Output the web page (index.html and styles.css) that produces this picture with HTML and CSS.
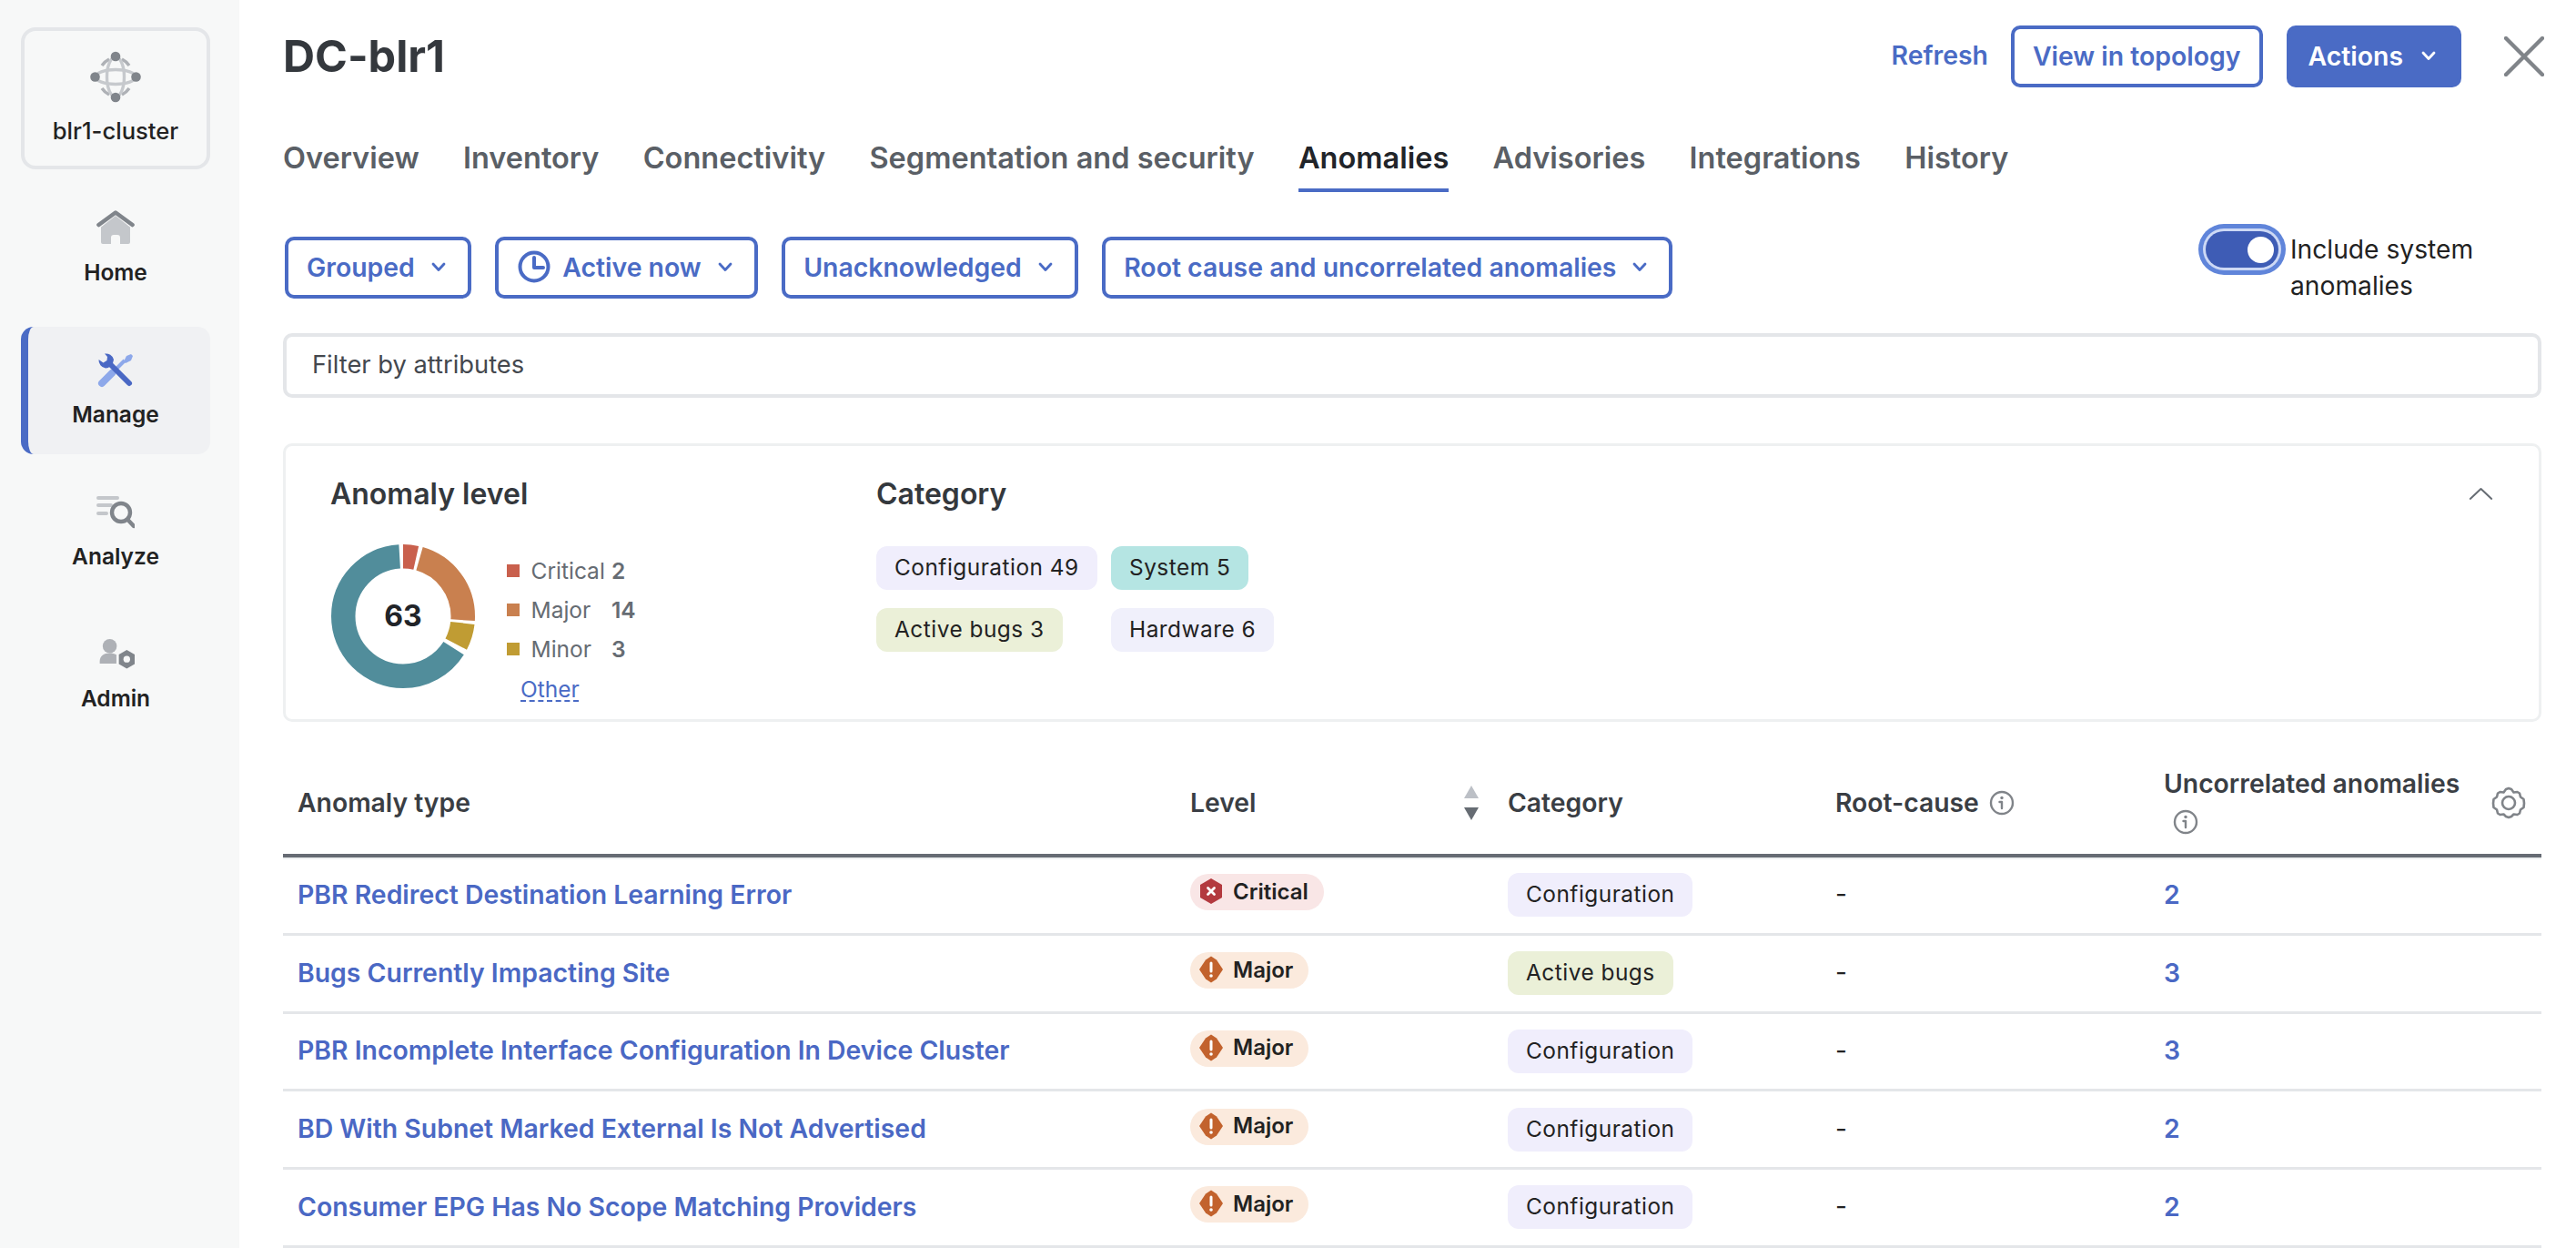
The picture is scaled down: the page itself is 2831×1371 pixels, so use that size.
FILE: index.html
```html
<!DOCTYPE html>
<html lang="en">
<head>
<meta charset="utf-8">
<title>DC-blr1</title>
<link rel="stylesheet" href="styles.css">
</head>
<body>
<aside class="sidebar">
  <div class="cluster">
    <svg class="cluster-icon" viewBox="0 0 56 57">
      <g fill="none" stroke="#aeb1b6" stroke-width="3.4">
        <path d="M13 16A21 21 0 0 1 21 9M35 9A21 21 0 0 1 43 16M43 41A21 21 0 0 1 35 48M21 48A21 21 0 0 1 13 41"/>
      </g>
      <g fill="none" stroke="#c6c9cd" stroke-width="3.4">
        <ellipse cx="28" cy="28.5" rx="9.5" ry="22"/>
        <ellipse cx="28" cy="28.5" rx="22" ry="8"/>
      </g>
      <g fill="#80858b">
        <circle cx="28" cy="6" r="5.3"/>
        <circle cx="28" cy="51" r="5.3"/>
        <circle cx="5.5" cy="28.5" r="5.3"/>
        <circle cx="50.5" cy="28.5" r="5.3"/>
      </g>
    </svg>
    <span class="cluster-name">blr1-cluster</span>
  </div>
  <nav class="nav">
    <a class="nav-item">
      <svg class="nav-icon" viewBox="0 0 42 40">
        <path d="M5 19.5 21 7l16 12.500V36a2 2 0 0 1-2 2H26v-7a3 3 0 0 0-3-3h-4a3 3 0 0 0-3 3v7H7a2 2 0 0 1-2-2z" fill="#c4c7cb"/>
        <path d="M2.5 17 21 3.5 39.5 17" fill="none" stroke="#80858b" stroke-width="4.6" stroke-linecap="round" stroke-linejoin="round"/>
      </svg>
      <span class="nav-label">Home</span>
    </a>
    <a class="nav-item active">
      <svg class="nav-icon" viewBox="0 0 42 40">
        <path d="M6 35 17 24" stroke="#8da8ea" stroke-width="8" stroke-linecap="round" fill="none"/>
        <path d="M17 24 31 10" stroke="#8da8ea" stroke-width="4" fill="none"/>
        <path d="M30 11l3-6 5-2 2 2-2 5-6 3z" fill="#8da8ea"/>
        <path d="M15 14 36 35" stroke="#4a68c4" stroke-width="6" stroke-linecap="round" fill="none"/>
        <path d="M9 2.5a9 9 0 0 1 10 6.5l-1 4-5 5-3 .5A9 9 0 0 1 2.5 9l5 3.5 4-2.500.5-4z" fill="#4a68c4"/>
      </svg>
      <span class="nav-label">Manage</span>
    </a>
    <a class="nav-item">
      <svg class="nav-icon" viewBox="0 0 42 40">
        <path d="M2 5h21M2 13h14M2 22h9" stroke="#c4c7cb" stroke-width="4" stroke-linecap="round" fill="none"/>
        <circle cx="27" cy="21" r="10" fill="none" stroke="#80858b" stroke-width="4.4"/>
        <path d="M34 28.5 41 36" stroke="#80858b" stroke-width="4.4" stroke-linecap="round" fill="none"/>
      </svg>
      <span class="nav-label">Analyze</span>
    </a>
    <a class="nav-item">
      <svg class="nav-icon" viewBox="0 0 46 40">
        <circle cx="16" cy="11" r="8.5" fill="#aeb1b6"/>
        <path d="M4 32v-3c0-6 5-9.500 12-9.500 3 0 5.500.5 8 1.800V32z" fill="#aeb1b6"/>
        <path d="M36.500 15.500 46 21v11.500L36.500 38 27 32.500V21z" fill="#80858b"/>
        <circle cx="36.5" cy="26.8" r="4" fill="#f7f8f8"/>
      </svg>
      <span class="nav-label">Admin</span>
    </a>
  </nav>
</aside>

<main class="main">
  <header class="header">
    <h1 class="title">DC-blr1</h1>
    <div class="header-actions">
      <a class="link-btn">Refresh</a>
      <button class="btn btn-outline">View in topology</button>
      <button class="btn btn-solid btn-menu">Actions
        <svg class="chev" viewBox="0 0 16 11"><path d="M2 2l6 6.5L14 2"/></svg>
      </button>
      <svg class="close" viewBox="0 0 44 44"><path d="M2 2l40 40M42 2 2 42"/></svg>
    </div>
  </header>

  <nav class="tabs">
    <a class="tab">Overview</a>
    <a class="tab">Inventory</a>
    <a class="tab">Connectivity</a>
    <a class="tab">Segmentation and security</a>
    <a class="tab current">Anomalies</a>
    <a class="tab">Advisories</a>
    <a class="tab">Integrations</a>
    <a class="tab">History</a>
  </nav>

  <section class="filters">
    <div class="filter-buttons">
      <button class="btn btn-outline btn-menu">Grouped
        <svg class="chev" viewBox="0 0 16 11"><path d="M2 2l6 6.5L14 2"/></svg>
      </button>
      <button class="btn btn-outline btn-menu btn-clock">
        <svg class="clock" viewBox="0 0 36 36"><circle cx="18" cy="18" r="15.5"/><path d="M18 8v11h10"/></svg>
        Active now
        <svg class="chev" viewBox="0 0 16 11"><path d="M2 2l6 6.5L14 2"/></svg>
      </button>
      <button class="btn btn-outline btn-menu">Unacknowledged
        <svg class="chev" viewBox="0 0 16 11"><path d="M2 2l6 6.5L14 2"/></svg>
      </button>
      <button class="btn btn-outline btn-menu">Root cause and uncorrelated anomalies
        <svg class="chev" viewBox="0 0 16 11"><path d="M2 2l6 6.5L14 2"/></svg>
      </button>
    </div>
    <div class="toggle-wrap">
      <span class="toggle"><span class="knob"></span></span>
      <span class="toggle-label">Include system anomalies</span>
    </div>
  </section>

  <div class="search">Filter by attributes</div>

  <section class="card">
    <div class="level">
      <h2 class="card-title">Anomaly level</h2>
      <div class="level-body">
        <div class="donut">
          <svg viewBox="0 0 158 158">
            <g fill="none" stroke-width="26.5" transform="rotate(-90 79 79)">
              <circle cx="79" cy="79" r="65.75" pathLength="630" stroke="#c9604d" stroke-dasharray="22 608"/>
              <circle cx="79" cy="79" r="65.75" pathLength="630" stroke="#c9804f" stroke-dasharray="136 494" stroke-dashoffset="-28"/>
              <circle cx="79" cy="79" r="65.75" pathLength="630" stroke="#c09c33" stroke-dasharray="37 593" stroke-dashoffset="-169"/>
              <circle cx="79" cy="79" r="65.75" pathLength="630" stroke="#518d9b" stroke-dasharray="410 220" stroke-dashoffset="-214"/>
            </g>
          </svg>
          <span class="donut-value">63</span>
        </div>
        <div class="legend">
          <i class="swatch sw-critical"></i><span class="legend-label">Critical</span><b class="legend-num">2</b>
          <i class="swatch sw-major"></i><span class="legend-label">Major</span><b class="legend-num">14</b>
          <i class="swatch sw-minor"></i><span class="legend-label">Minor</span><b class="legend-num">3</b>
          <a class="legend-other">Other</a>
        </div>
      </div>
    </div>
    <div class="category">
      <h2 class="card-title">Category</h2>
      <div class="chips">
        <span class="chip chip-config">Configuration 49</span>
        <span class="chip chip-system">System 5</span>
        <span class="chip chip-bugs">Active bugs 3</span>
        <span class="chip chip-hardware">Hardware 6</span>
      </div>
    </div>
    <svg class="collapse" viewBox="0 0 30 16"><path d="M2 14 15 2l13 12"/></svg>
  </section>

  <section class="table">
    <div class="row head">
      <div class="cell">Anomaly type</div>
      <div class="cell cell-level">Level
        <span class="sort"><i class="sort-up"></i><i class="sort-down"></i></span>
      </div>
      <div class="cell">Category</div>
      <div class="cell cell-info">Root-cause
        <svg class="info" viewBox="0 0 28 28"><circle cx="14" cy="14" r="12"/><path d="M14 13v7M11.5 13H14"/><circle class="dot" cx="14" cy="8.5" r="1.7"/></svg>
      </div>
      <div class="cell cell-last">
        <div class="uncorrelated">Uncorrelated anomalies
          <svg class="info info-under" viewBox="0 0 28 28"><circle cx="14" cy="14" r="12"/><path d="M14 13v7M11.5 13H14"/><circle class="dot" cx="14" cy="8.5" r="1.7"/></svg>
        </div>
        <svg class="gear" viewBox="0 0 38 36"><path d="M19 2l3 1 2.5 3.5 4-.5 2.5 1.500 1 4 3.500 2.500.5 4.500-.5 4.500-3.500 2.500-1 4L28.500 31l-4-.5L22 33l-3 1-3-1-2.500-2.500-4 .5L7 29.500l-1-4L2.500 23 2 18.500l.5-4.500L6 11.500l1-4L9.500 6l4 .5L16 3z"/><circle cx="19" cy="18" r="7"/></svg>
      </div>
    </div>

    <div class="row">
      <div class="cell"><a class="anomaly">PBR Redirect Destination Learning Error</a></div>
      <div class="cell"><span class="pill pill-critical"><svg class="sev" viewBox="0 0 28 30"><path d="M14 1l12 7v14l-12 7-12-7V8z" fill="#b33a3f"/><path d="M10.5 11.500l7 7M17.500 11.500l-7 7" stroke="#fff" stroke-width="2.8" stroke-linecap="round"/></svg>Critical</span></div>
      <div class="cell"><span class="chip chip-config">Configuration</span></div>
      <div class="cell dash">-</div>
      <div class="cell"><a class="count">2</a></div>
    </div>
    <div class="row">
      <div class="cell"><a class="anomaly">Bugs Currently Impacting Site</a></div>
      <div class="cell"><span class="pill pill-major"><svg class="sev" viewBox="0 0 28 30"><path d="M14 .5l6 4 7 10.500-7 10.500-6 4-6-4L1 15 8 4.500z" fill="#c2622d"/><path d="M14 8v9" stroke="#fff" stroke-width="3" stroke-linecap="round"/><circle cx="14" cy="22" r="1.8" fill="#fff"/></svg>Major</span></div>
      <div class="cell"><span class="chip chip-bugs">Active bugs</span></div>
      <div class="cell dash">-</div>
      <div class="cell"><a class="count">3</a></div>
    </div>
    <div class="row">
      <div class="cell"><a class="anomaly">PBR Incomplete Interface Configuration In Device Cluster</a></div>
      <div class="cell"><span class="pill pill-major"><svg class="sev" viewBox="0 0 28 30"><path d="M14 .5l6 4 7 10.500-7 10.500-6 4-6-4L1 15 8 4.500z" fill="#c2622d"/><path d="M14 8v9" stroke="#fff" stroke-width="3" stroke-linecap="round"/><circle cx="14" cy="22" r="1.8" fill="#fff"/></svg>Major</span></div>
      <div class="cell"><span class="chip chip-config">Configuration</span></div>
      <div class="cell dash">-</div>
      <div class="cell"><a class="count">3</a></div>
    </div>
    <div class="row">
      <div class="cell"><a class="anomaly">BD With Subnet Marked External Is Not Advertised</a></div>
      <div class="cell"><span class="pill pill-major"><svg class="sev" viewBox="0 0 28 30"><path d="M14 .5l6 4 7 10.500-7 10.500-6 4-6-4L1 15 8 4.500z" fill="#c2622d"/><path d="M14 8v9" stroke="#fff" stroke-width="3" stroke-linecap="round"/><circle cx="14" cy="22" r="1.8" fill="#fff"/></svg>Major</span></div>
      <div class="cell"><span class="chip chip-config">Configuration</span></div>
      <div class="cell dash">-</div>
      <div class="cell"><a class="count">2</a></div>
    </div>
    <div class="row">
      <div class="cell"><a class="anomaly">Consumer EPG Has No Scope Matching Providers</a></div>
      <div class="cell"><span class="pill pill-major"><svg class="sev" viewBox="0 0 28 30"><path d="M14 .5l6 4 7 10.500-7 10.500-6 4-6-4L1 15 8 4.500z" fill="#c2622d"/><path d="M14 8v9" stroke="#fff" stroke-width="3" stroke-linecap="round"/><circle cx="14" cy="22" r="1.8" fill="#fff"/></svg>Major</span></div>
      <div class="cell"><span class="chip chip-config">Configuration</span></div>
      <div class="cell dash">-</div>
      <div class="cell"><a class="count">2</a></div>
    </div>
  </section>
</main>
</body>
</html>
```
FILE: styles.css
```css
* { box-sizing: border-box; }
html, body { height: 100%; }
body {
  margin: 0;
  display: flex;
  overflow: hidden;
  background: #fff;
  font-family: Inter, "Noto Sans", sans-serif;
  color: #222;
}

/* Sidebar */
.sidebar {
  flex: 0 0 263px;
  height: 100%;
  background: #f7f8f8;
  padding: 30px 32px 0 23px;
  display: flex;
  flex-direction: column;
  gap: 17px;
}
.cluster {
  height: 156px;
  border: 4px solid #e4e6e9;
  border-radius: 16px;
  display: flex;
  flex-direction: column;
  align-items: center;
  padding-top: 22px;
}
.cluster-icon { width: 56px; height: 57px; }
.cluster-name {
  margin-top: 14px;
  font-size: 25.6px;
  line-height: 34px;
  font-weight: 500;
  color: #222;
}
.nav { display: flex; flex-direction: column; gap: 16px; }
.nav-item {
  height: 140px;
  padding-top: 27px;
  display: flex;
  flex-direction: column;
  align-items: center;
  gap: 13px;
  border-radius: 14px;
}
.nav-item.active {
  background: #f0f1f3;
  border-left: 8px solid #4a6bc5;
  padding-right: 8px;
}
.nav-icon { width: 42px; height: 40px; }
.nav-label { font-size: 24.5px; line-height: 32px; font-weight: 600; color: #222; }

/* Main */
.main {
  flex: 1;
  min-width: 0;
  padding: 28px 38px 0 48px;
}
.header { display: flex; justify-content: space-between; align-items: center; height: 68px; }
.title { margin: 0; font-size: 48.5px; line-height: 56px; font-weight: 700; color: #34383d; }
.header-actions { display: flex; align-items: center; }
.link-btn { font-size: 28.4px; line-height: 34px; padding-bottom: 2px; font-weight: 600; color: #4a6bc5; margin-right: 25px; }
.btn {
  height: 68px;
  padding: 0 20px 2px;
  border-radius: 10px;
  font: 600 28.4px Inter, "Noto Sans", sans-serif;
  display: inline-flex;
  align-items: center;
  white-space: nowrap;
}
.btn-menu { padding-right: 24px; }
.btn-outline { border: 4px solid #4a6bc5; background: #fff; color: #4a6bc5; }
.btn-solid { border: 4px solid #4a6bc5; background: #4a6bc5; color: #fff; margin-left: 26px; }
.btn-solid .chev { margin-left: 20px; }
.chev { width: 16px; height: 11px; margin-left: 18px; fill: none; stroke: currentColor; stroke-width: 2.8; stroke-linecap: round; stroke-linejoin: round; }
.close { width: 44px; height: 44px; margin-left: 47px; margin-right: -3px; fill: none; stroke: #808489; stroke-width: 4.4; stroke-linecap: round; }

.tabs { display: flex; gap: 48.3px; margin-top: 58px; margin-bottom: 35px; }
.tab {
  font-size: 32.5px;
  line-height: 40px;
  font-weight: 600;
  color: #5a5f66;
  padding-bottom: 13px;
  border-bottom: 4px solid transparent;
}
.tab.current { color: #212429; border-bottom-color: #4a6bc5; }

.filters { display: flex; justify-content: space-between; height: 88px; margin-right: -2px; }
.filter-buttons { display: flex; gap: 26.5px; margin-top: 14px; margin-left: 2px; }
.btn-clock { padding-left: 21px; }
.clock { width: 36px; height: 36px; margin-right: 13px; fill: none; stroke: currentColor; stroke-width: 4; stroke-linecap: round; stroke-linejoin: round; }
.toggle-wrap { display: flex; width: 379px; padding-left: 8px; }
.toggle {
  flex: 0 0 80px;
  height: 40px;
  margin-top: 8px;
  border-radius: 20px;
  background: #3e5cb5;
  box-shadow: 0 0 0 3px #cdd9f5, 0 0 0 8px #6085da;
  display: flex;
  align-items: center;
  justify-content: flex-end;
  padding-right: 5px;
}
.knob { width: 29px; height: 29px; border-radius: 50%; background: #fff; }
.toggle-label { margin: 8px 0 0 13px; font-size: 28.2px; line-height: 40px; color: #222; width: 260px; }

.search {
  height: 71px;
  margin-top: 32px;
  border: 4px solid #e4e6e9;
  border-radius: 10px;
  padding: 0 0 2px 28px;
  display: flex;
  align-items: center;
  font-size: 27.3px;
  color: #44484e;
}

/* Summary card */
.card {
  height: 306px;
  margin-top: 50px;
  border: 3px solid #eef0f1;
  border-radius: 10px;
  padding: 33px 50px 0 49px;
  display: flex;
  align-items: flex-start;
}
.level { flex: 0 0 600px; }
.category { flex: 1; }
.card-title { margin: 0; font-size: 32px; line-height: 40px; font-weight: 600; color: #34383d; }
.level-body { display: flex; margin-top: 35px; }
.donut { position: relative; width: 158px; height: 158px; margin-left: 1px; }
.donut svg { display: block; width: 158px; height: 158px; }
.donut-value {
  position: absolute;
  inset: 0 0 2px;
  display: flex;
  align-items: center;
  justify-content: center;
  font-size: 32px;
  font-weight: 700;
  color: #212429;
}
.legend {
  margin: 7px 0 0 35px;
  display: grid;
  grid-template-columns: 14px 76px auto;
  column-gap: 12.5px;
  grid-auto-rows: 43.3px;
  align-items: center;
  align-content: start;
  font-size: 24.5px;
  color: #666c73;
}
.swatch { width: 14px; height: 14px; }
.sw-critical { background: #c9604d; }
.sw-major { background: #c9804f; }
.sw-minor { background: #c09c33; }
.legend-num { font-weight: 600; }
.legend-other {
  grid-column: 1 / -1;
  margin-left: 15px;
  color: #4a6bc5;
  text-decoration: underline dashed 1.5px;
  text-underline-offset: 4px;
}

.chips {
  display: grid;
  grid-template-columns: 242px auto;
  gap: 20px 16px;
  justify-items: start;
  margin-top: 37px;
}
.chip {
  display: inline-flex;
  align-items: center;
  height: 48px;
  padding: 0 20px 2px;
  border-radius: 12px;
  font-size: 24.4px;
  letter-spacing: .5px;
  color: #222;
  white-space: nowrap;
}
.chip-config { background: #f0eefc; }
.chip-system { background: #b5e5e3; }
.chip-bugs { background: #ebf0d8; }
.chip-hardware { background: #f0f0fb; }
.collapse { width: 27px; height: 15px; margin-top: 12px; flex: none; fill: none; stroke: #666c73; stroke-width: 2.2; stroke-linecap: round; stroke-linejoin: round; }

/* Table */
.table { margin-top: 35px; }
.row {
  display: grid;
  grid-template-columns: 981px 349px 360px 361px 1fr;
  height: 85.75px;
  border-bottom: 3px solid #e4e6e9;
  align-items: center;
}
.row.head {
  height: 114px;
  border-bottom: 4px solid #666b73;
  box-shadow: 0 2px 0 #eef0f1;
  font-size: 28.3px;
  font-weight: 600;
  color: #3a3e44;
}
.cell { padding: 0 16px; min-width: 0; }
.head .cell { padding-bottom: 2px; }
.cell-level { display: flex; justify-content: space-between; align-items: center; }
.sort { display: flex; flex-direction: column; gap: 10px; }
.sort i { display: block; width: 0; height: 0; border-left: 8px solid transparent; border-right: 8px solid transparent; }
.sort-up { border-bottom: 14px solid #bcc0c6; }
.sort-down { border-top: 14px solid #666c73; }
.cell-info { display: flex; align-items: center; gap: 11px; }
.info { width: 28px; height: 28px; fill: none; stroke: #808489; stroke-width: 2.4; stroke-linecap: round; flex: none; }
.info .dot { fill: #808489; stroke: none; }
.cell-last { display: flex; align-items: center; justify-content: space-between; padding-right: 17px; }
.uncorrelated { width: 340px; line-height: 42px; }
.info-under { display: block; margin: 7px 0 7px 10px; }
.gear { width: 38px; height: 36px; flex: none; fill: none; stroke: #808489; stroke-width: 2.6; stroke-linejoin: round; }
.anomaly, .count { display: block; padding-bottom: 2px; font-size: 28.4px; font-weight: 600; color: #4a68c4; }
.dash { font-size: 28px; padding-bottom: 2px; color: #222; }
.pill {
  display: inline-flex;
  align-items: center;
  height: 40px;
  margin-bottom: 6px;
  padding: 0 17px 2px 9px;
  border-radius: 20px;
  font-size: 24px;
  font-weight: 600;
  color: #222;
  vertical-align: middle;
}
.pill-critical { background: #f9e6e6; }
.pill-major { background: #fbeadd; }
.sev { width: 28px; height: 30px; margin-right: 10px; flex: none; }
```
